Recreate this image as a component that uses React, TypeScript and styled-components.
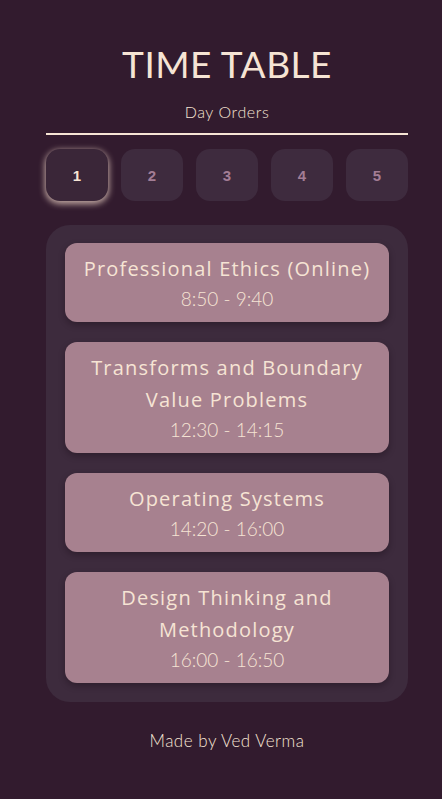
import React from "react";
import styled, { createGlobalStyle } from "styled-components";

const Global = createGlobalStyle`
  html, body { margin: 0; padding: 0; background: #321b2e; }
  body { font-family: "Lato", "Noto Sans", sans-serif; }
`;

const Page = styled.div`
  box-sizing: border-box;
  width: 442px;
  min-height: 799px;
  padding: 0 34px 0 46px;
  display: flex;
  flex-direction: column;
  align-items: stretch;
  color: #f6e4d4;
`;

const Title = styled.h1`
  margin: 42px 0 0;
  font-size: 37px;
  font-weight: 400;
  line-height: 44px;
  text-align: center;
  letter-spacing: 0.5px;
`;

const Subtitle = styled.div`
  margin-top: 16px;
  font-size: 16px;
  font-weight: 300;
  line-height: 20px;
  letter-spacing: 0.6px;
  text-align: center;
`;

const Rule = styled.hr`
  margin: 11px 0 0;
  border: none;
  height: 2px;
  background: #f6e4d4;
`;

const Tabs = styled.div`
  margin-top: 14px;
  display: grid;
  grid-template-columns: repeat(5, 1fr);
  column-gap: 13px;
`;

const Tab = styled.button<{ $active?: boolean }>`
  height: 52px;
  border: none;
  border-radius: 14px;
  font-family: "Liberation Sans Narrow", "Liberation Sans", sans-serif;
  font-weight: 700;
  font-size: 15px;
  background: ${(p) => (p.$active ? "#3a2638" : "#3e2b3e")};
  color: ${(p) => (p.$active ? "#f6e4d4" : "#a37d95")};
  box-shadow: ${(p) => (p.$active ? "0 2px 6px 1px rgba(240, 215, 200, 0.75)" : "none")};
  cursor: pointer;
`;

const Panel = styled.div`
  margin-top: 24px;
  background: #3d2b3d;
  border-radius: 24px;
  padding: 18px 19px 19px;
  display: flex;
  flex-direction: column;
  gap: 20px;
`;

const Card = styled.div`
  background: #a7818f;
  border-radius: 12px;
  padding: 10px 10px 10px;
  text-align: center;
  box-shadow: 0 3px 6px rgba(20, 8, 18, 0.35);
`;

const Subject = styled.div`
  font-family: "Open Sans", "Noto Sans", sans-serif;
  font-size: 20px;
  line-height: 32px;
  font-weight: 400;
  letter-spacing: 1.2px;
  color: #f6e4d4;
`;

const Time = styled.div`
  font-size: 19px;
  line-height: 27px;
  font-weight: 300;
  color: #f6e4d4;
`;

const Footer = styled.div`
  margin-top: 28px;
  font-size: 17px;
  font-weight: 300;
  letter-spacing: 0.5px;
  text-align: center;
`;

const classes = [
  { name: "Professional Ethics (Online)", time: "8:50 - 9:40" },
  { name: "Transforms and Boundary Value Problems", time: "12:30 - 14:15" },
  { name: "Operating Systems", time: "14:20 - 16:00" },
  { name: "Design Thinking and Methodology", time: "16:00 - 16:50" },
];

export default function App() {
  return (
    <Page>
      <Global />
      <Title>TIME TABLE</Title>
      <Subtitle>Day Orders</Subtitle>
      <Rule />
      <Tabs>
        {[1, 2, 3, 4, 5].map((n) => (
          <Tab key={n} $active={n === 1}>
            {n}
          </Tab>
        ))}
      </Tabs>
      <Panel>
        {classes.map((c) => (
          <Card key={c.name}>
            <Subject>{c.name}</Subject>
            <Time>{c.time}</Time>
          </Card>
        ))}
      </Panel>
      <Footer>Made by Ved Verma</Footer>
    </Page>
  );
}
